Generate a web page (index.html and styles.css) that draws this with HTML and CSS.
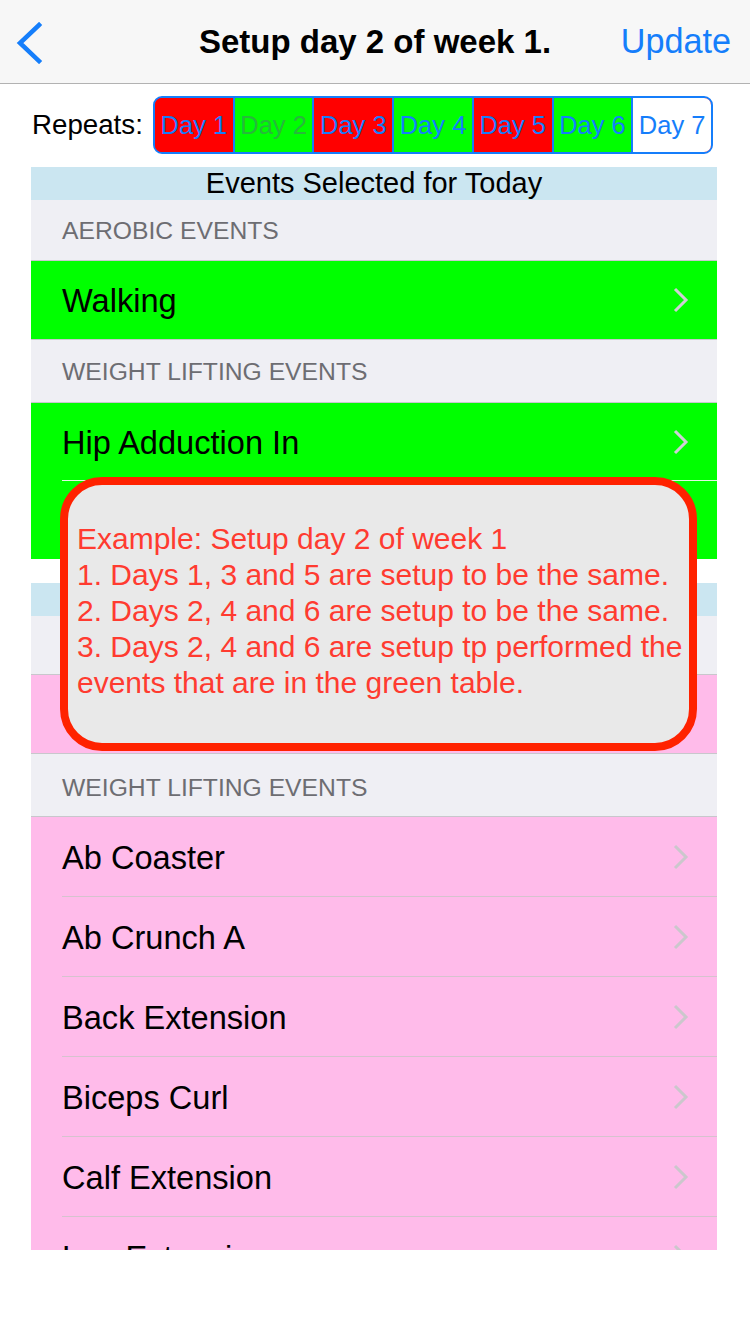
FILE: index.html
```html
<!DOCTYPE html>
<html>
<head>
<meta charset="utf-8">
<link rel="stylesheet" href="styles.css">
</head>
<body>
<div class="page">
  <header class="nav">
    <div class="nav-left">
      <svg class="back" width="30" height="42" viewBox="0 0 30 42"><polyline points="25,3 6,21 25,39" fill="none" stroke="#157efb" stroke-width="4.5" stroke-linecap="square" stroke-linejoin="miter"/></svg>
    </div>
    <div class="nav-title">Setup day 2 of week 1.</div>
    <div class="nav-right">Update</div>
  </header>

  <div class="repeats">
    <span class="repeats-label">Repeats:</span>
    <div class="segmented">
      <div class="seg red">Day 1</div>
      <div class="seg green dim">Day 2</div>
      <div class="seg red">Day 3</div>
      <div class="seg green">Day 4</div>
      <div class="seg red">Day 5</div>
      <div class="seg green">Day 6</div>
      <div class="seg white">Day 7</div>
    </div>
  </div>

  <section class="table table-top">
    <div class="banner">Events Selected for Today</div>
    <div class="header first">AEROBIC EVENTS</div>
    <div class="row green-row last">
      <span class="label">Walking</span>
      <svg class="chev" width="16" height="26" viewBox="0 0 16 26"><polyline points="2,2 13,13 2,24" fill="none" stroke="#cfcfd6" stroke-width="3"/></svg>
    </div>
    <div class="header mid">WEIGHT LIFTING EVENTS</div>
    <div class="row green-row">
      <span class="label">Hip Adduction In</span>
      <svg class="chev" width="16" height="26" viewBox="0 0 16 26"><polyline points="2,2 13,13 2,24" fill="none" stroke="#cfcfd6" stroke-width="3"/></svg>
    </div>
    <div class="row green-row last">
      <span class="label"></span>
    </div>
  </section>

  <section class="table table-bottom">
    <div class="banner"></div>
    <div class="header second"></div>
    <div class="row pink-row last"><span class="label"></span></div>
    <div class="header mid lower">WEIGHT LIFTING EVENTS</div>
    <div class="row pink-row tall">
      <span class="label">Ab Coaster</span>
      <svg class="chev" width="16" height="26" viewBox="0 0 16 26"><polyline points="2,2 13,13 2,24" fill="none" stroke="#cbc7cc" stroke-width="3"/></svg>
    </div>
    <div class="row pink-row tall">
      <span class="label">Ab Crunch A</span>
      <svg class="chev" width="16" height="26" viewBox="0 0 16 26"><polyline points="2,2 13,13 2,24" fill="none" stroke="#cbc7cc" stroke-width="3"/></svg>
    </div>
    <div class="row pink-row tall">
      <span class="label">Back Extension</span>
      <svg class="chev" width="16" height="26" viewBox="0 0 16 26"><polyline points="2,2 13,13 2,24" fill="none" stroke="#cbc7cc" stroke-width="3"/></svg>
    </div>
    <div class="row pink-row tall">
      <span class="label">Biceps Curl</span>
      <svg class="chev" width="16" height="26" viewBox="0 0 16 26"><polyline points="2,2 13,13 2,24" fill="none" stroke="#cbc7cc" stroke-width="3"/></svg>
    </div>
    <div class="row pink-row tall">
      <span class="label">Calf Extension</span>
      <svg class="chev" width="16" height="26" viewBox="0 0 16 26"><polyline points="2,2 13,13 2,24" fill="none" stroke="#cbc7cc" stroke-width="3"/></svg>
    </div>
    <div class="row pink-row tall">
      <span class="label">Leg Extension</span>
      <svg class="chev" width="16" height="26" viewBox="0 0 16 26"><polyline points="2,2 13,13 2,24" fill="none" stroke="#cbc7cc" stroke-width="3"/></svg>
    </div>
  </section>

  <div class="callout">
    <div class="callout-text">
      <div>Example: Setup day 2 of week 1</div>
      <div>1. Days 1, 3 and 5 are setup to be the same.</div>
      <div>2. Days 2, 4 and 6 are setup to be the same.</div>
      <div>3. Days 2, 4 and 6 are setup tp performed the</div>
      <div>events that are in the green table.</div>
    </div>
  </div>
</div>
</body>
</html>
```

FILE: styles.css
```css
* { box-sizing: border-box; }

html, body {
  margin: 0;
  padding: 0;
  background: #ffffff;
}

body {
  font-family: "Liberation Sans", Arial, sans-serif;
  color: #000;
}

.page {
  position: relative;
  width: 750px;
  height: 1334px;
  overflow: hidden;
}

/* Nav bar */
.nav {
  height: 84px;
  background: #f7f7f7;
  border-bottom: 1px solid #b2b2b2;
  display: grid;
  grid-template-columns: 1fr auto 1fr;
  align-items: center;
}

.nav-left {
  padding-left: 14px;
  display: flex;
  align-items: center;
  padding-top: 2px;
}

.nav-title {
  font-weight: bold;
  font-size: 33px;
}

.nav-right {
  justify-self: end;
  padding-right: 19px;
  color: #157efb;
  font-size: 34.2px;
}

/* Repeats */
.repeats {
  margin-top: 12px;
  height: 58px;
  display: flex;
  align-items: center;
  padding-left: 32px;
}

.repeats-label {
  font-size: 27.7px;
  width: 121px;
}

.segmented {
  display: flex;
  width: 560px;
  height: 58px;
  border: 2px solid #157efb;
  border-radius: 9px;
  overflow: hidden;
  background: #ff0000;
}

.seg {
  flex: 1;
  display: flex;
  align-items: center;
  justify-content: center;
  font-size: 25.5px;
  color: #157efb;
  border-right: 2px solid #157efb;
  white-space: nowrap;
}

.seg:last-child { border-right: none; }
.seg.red { background: #ff0000; }
.seg.green { background: #00ff00; }
.seg.white { background: #ffffff; }
.seg.dim { color: #27b83c; }

/* Tables */
.table {
  margin: 0 31px;
  width: 686px;
}

.table-top { margin-top: 13px; }

.table-bottom {
  margin-top: 24px;
  height: 667px;
  overflow: hidden;
}

.banner {
  height: 33px;
  background: #cbe6f1;
  display: flex;
  align-items: center;
  justify-content: center;
  font-size: 29px;
}

.header {
  background: #efeff4;
  color: #6d6d72;
  font-size: 24.7px;
  padding-left: 31px;
  display: flex;
  align-items: center;
  border-bottom: 1px solid #c8c7cc;
}

.header.first { height: 61px; padding-top: 2px; }
.header.second { height: 59px; }
.header.mid {
  height: 64px;
  border-top: 1px solid #c8c7cc;
  padding-top: 2px;
}
.header.lower { padding-top: 6px; }

.row {
  position: relative;
  height: 78px;
  display: flex;
  align-items: center;
  justify-content: space-between;
  padding-left: 31px;
  padding-right: 28px;
}

.row.tall { height: 80px; }

.row::after {
  content: "";
  position: absolute;
  left: 31px;
  right: 0;
  bottom: 0;
  height: 1px;
  background: #cfcbd2;
}

.row.last::after { display: none; }

.green-row { background: #00ff00; }
.green-row::after { background: #e2f7e2; }
.pink-row { background: #ffbbea; }
.pink-row::after { background: #d6c3ce; }

.label {
  font-size: 32.6px;
  padding-top: 1px;
}

.chev { display: block; }

/* Callout overlay */
.callout {
  position: absolute;
  left: 60px;
  top: 477px;
  width: 637px;
  height: 274px;
  border: 8px solid #ff2200;
  border-radius: 42px;
  background: #e9e9e9;
  display: flex;
  align-items: center;
  padding-left: 9px;
  padding-bottom: 6px;
}

.callout-text {
  color: #ff3b30;
  font-size: 30px;
  line-height: 36px;
  white-space: nowrap;
}
```
